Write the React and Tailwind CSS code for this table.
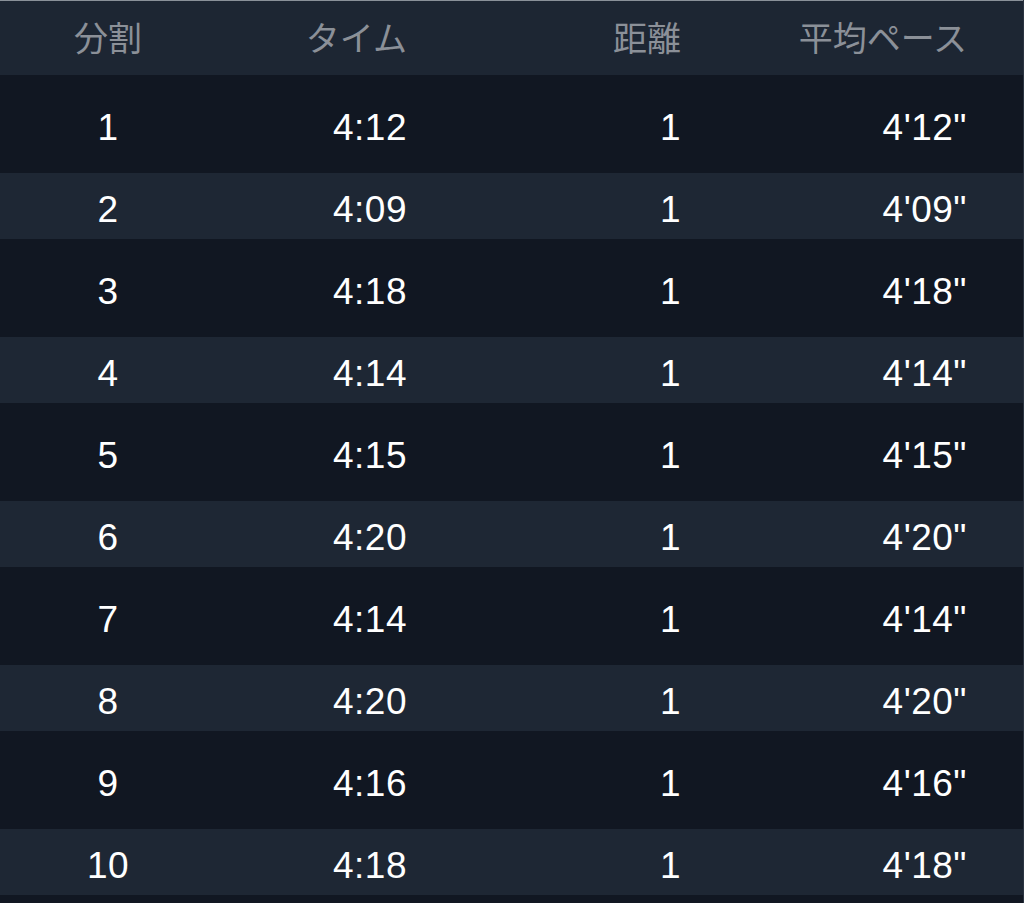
import React from "react";

const splits = [
  ["1", "4:12", "1", "4'12\""],
  ["2", "4:09", "1", "4'09\""],
  ["3", "4:18", "1", "4'18\""],
  ["4", "4:14", "1", "4'14\""],
  ["5", "4:15", "1", "4'15\""],
  ["6", "4:20", "1", "4'20\""],
  ["7", "4:14", "1", "4'14\""],
  ["8", "4:20", "1", "4'20\""],
  ["9", "4:16", "1", "4'16\""],
  ["10", "4:18", "1", "4'18\""],
];

const cols = "grid grid-cols-[216px_191px_274px_286px] items-center";

const Row = ({ cells, striped }) => (
  <div className="h-[82px] py-2">
    <div
      className={`${cols} h-full pt-2 text-[37px] tracking-[0.5px] text-white font-['Liberation_Sans',Arial,sans-serif] ${
        striped ? "bg-[#1e2734]" : ""
      }`}
    >
      <span className="text-center">{cells[0]}</span>
      <span className="text-right">{cells[1]}</span>
      <span className="text-right">{cells[2]}</span>
      <span className="text-right">{cells[3]}</span>
    </div>
  </div>
);

export default function App() {
  return (
    <div className="w-[1024px] h-[903px] overflow-hidden bg-[#111722] border-r border-[#2a3340]">
      <div className="h-[75px] bg-[#1d2633] border-t border-[#8a9199]">
        <div
          className={`${cols} h-full pb-1 text-[34px] text-[#8b9098] font-['Noto_Sans_CJK_JP','Liberation_Sans',sans-serif]`}
        >
          <span className="text-center">分割</span>
          <span className="text-right">タイム</span>
          <span className="text-right">距離</span>
          <span className="text-right">平均ペース</span>
        </div>
      </div>
      <div className="pt-2">
        {splits.map((s, i) => (
          <Row key={s[0]} cells={s} striped={i % 2 === 1} />
        ))}
      </div>
    </div>
  );
}
